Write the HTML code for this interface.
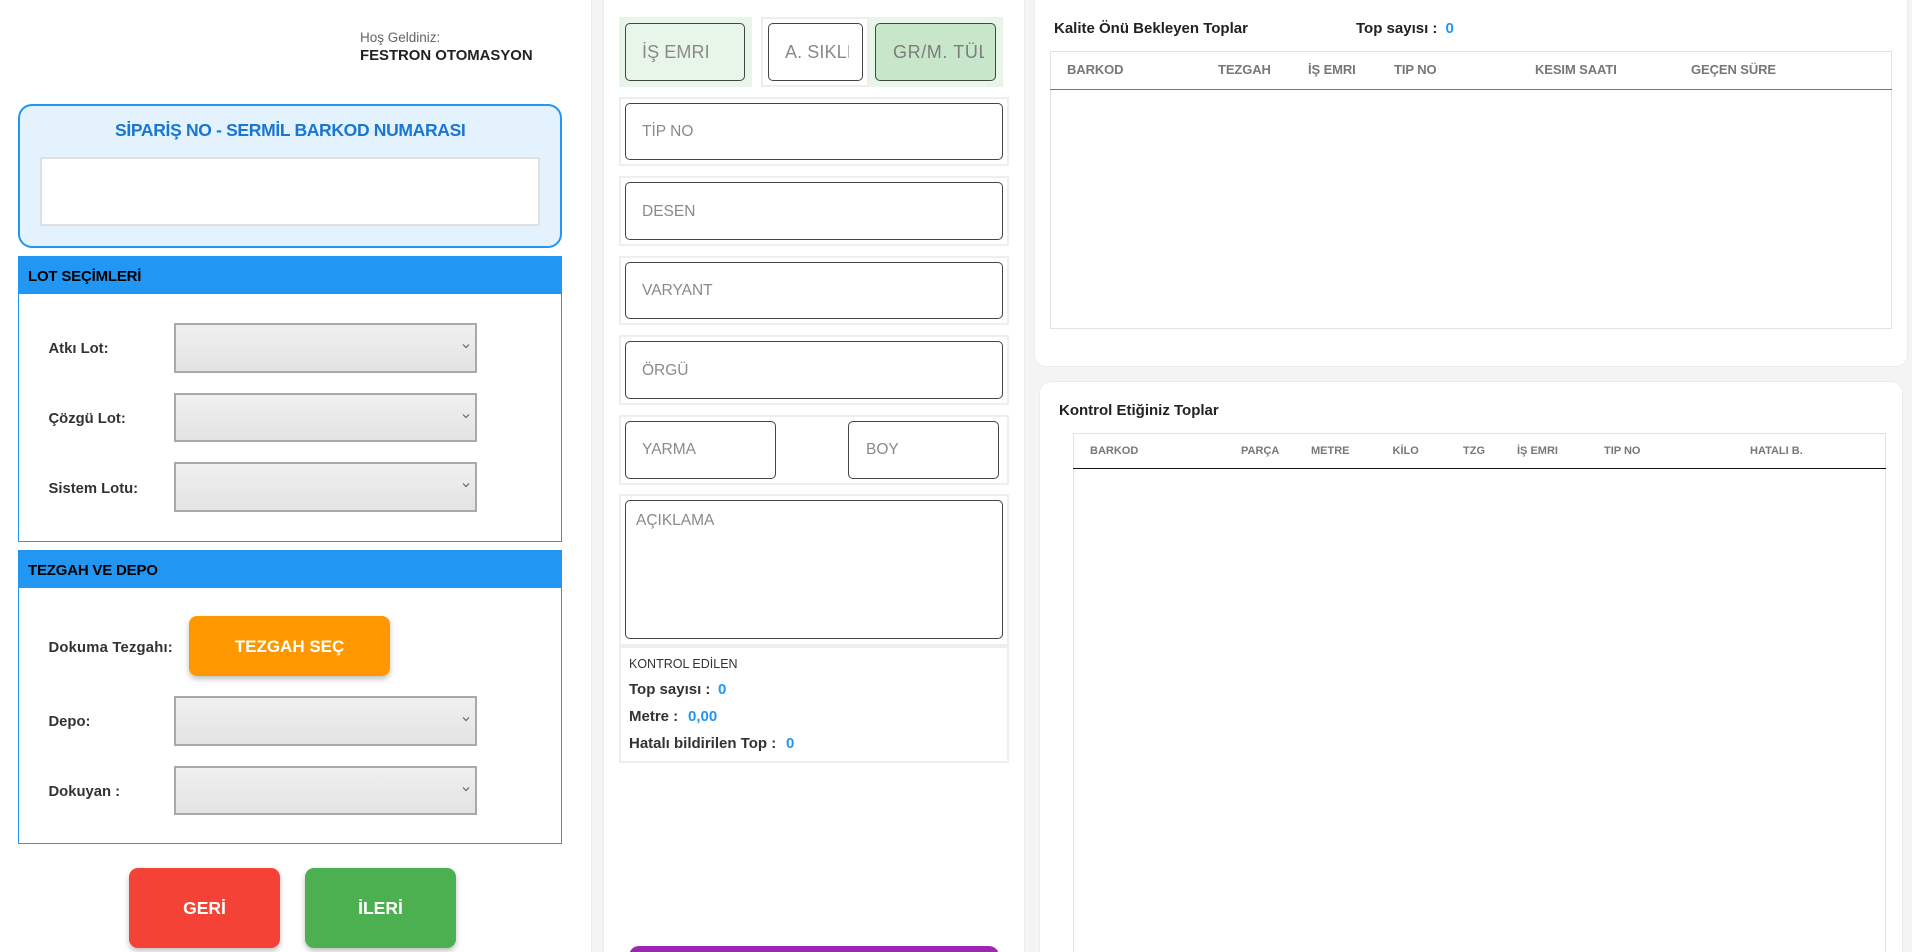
<!DOCTYPE html>
<html lang="tr"><head><meta charset="utf-8"><title>Kalite Kontrol</title>
<style>
*{box-sizing:border-box}
html,body{margin:0;padding:0;width:1912px;height:952px;overflow:hidden;background:#f4f4f4;font-family:"Liberation Sans",Arial,sans-serif}
#wrap{position:relative;width:1912px;height:952px;overflow:hidden;background:#f4f4f4}
.a{position:absolute}
.t{position:absolute;white-space:nowrap;line-height:20px;height:20px}
.panel{position:absolute;background:#fff;border:1px solid #ececec;border-radius:12px}
.hd{position:absolute;left:18px;width:544px;height:38px;background:#2196f3}
.bd{position:absolute;left:18px;width:544px;border:1px solid #2196f3;background:#fff}
.lh{font-weight:bold;font-size:15px;color:#000;letter-spacing:-.2px;left:28px}
.lb{font-weight:bold;font-size:14.8px;color:#333;left:48.5px}
.sel{position:absolute;left:174px;width:303px;border:2px solid #a9a9a9;background:linear-gradient(#f0f0f0,#e3e3e3)}
.sel svg{position:absolute;right:5px;top:50%;margin-top:-6px}
.grp{position:absolute;border:2px solid #eeeeee;background:#fff}
.inp{position:absolute;border:1px solid #444;border-radius:5px;background:#fff}
.ph{color:#8a8a8a;font-size:15.5px}
.ph2{color:#8a8a8a;font-size:18px;letter-spacing:-.1px}
.btn{position:absolute;border-radius:9px;box-shadow:0 3px 6px rgba(0,0,0,.25);color:#fff;font-weight:bold;font-size:17.5px;display:flex;align-items:center;justify-content:center}
.kv{font-weight:bold;font-size:15px;color:#333;left:629px}
.v{font-weight:bold;font-size:15px;color:#2196f3}
.th{font-weight:bold;font-size:13px;color:#777;letter-spacing:-.1px;top:60px}
.th2{font-weight:bold;font-size:11px;color:#777;top:441px}
.ttl{font-weight:bold;font-size:15px;color:#222}
</style></head><body><div id="wrap">

<div class="panel" style="left:-12px;top:-12px;width:604px;height:980px"></div>
<div class="t" style="left:360px;top:28px;font-size:13.5px;color:#666">Hoş Geldiniz:</div>
<div class="t" style="left:360px;top:46px;font-size:14.9px;font-weight:bold;color:#222">FESTRON OTOMASYON</div>

<div class="a" style="left:18px;top:104px;width:544px;height:144px;background:#e3f2fd;border:2px solid #2196f3;border-radius:14px"></div>
<div class="t" style="left:115px;top:120px;width:349px;text-align:center;font-size:17.5px;font-weight:bold;color:#1976d2;letter-spacing:-.33px">SİPARİŞ NO - SERMİL BARKOD NUMARASI</div>
<div class="a" style="left:40px;top:157px;width:500px;height:69px;background:#fff;border:2px solid #e0e0e0"></div>

<div class="bd" style="top:256px;height:286px"></div>
<div class="hd" style="top:256px"></div>
<div class="t lh" style="top:267px">LOT SEÇİMLERİ</div>
<div class="t lb" style="top:339px">Atkı Lot:</div>
<div class="sel" style="top:323px;height:50px"><svg width="8" height="8" viewBox="0 0 8 8"><path d="M1 2.5L4 5.5L7 2.5" fill="none" stroke="#666" stroke-width="1.2"/></svg></div>
<div class="t lb" style="top:409px">Çözgü Lot:</div>
<div class="sel" style="top:393px;height:49px"><svg width="8" height="8" viewBox="0 0 8 8"><path d="M1 2.5L4 5.5L7 2.5" fill="none" stroke="#666" stroke-width="1.2"/></svg></div>
<div class="t lb" style="top:479px">Sistem Lotu:</div>
<div class="sel" style="top:462px;height:50px"><svg width="8" height="8" viewBox="0 0 8 8"><path d="M1 2.5L4 5.5L7 2.5" fill="none" stroke="#666" stroke-width="1.2"/></svg></div>

<div class="bd" style="top:550px;height:294px"></div>
<div class="hd" style="top:550px"></div>
<div class="t lh" style="top:561px">TEZGAH VE DEPO</div>
<div class="t lb" style="top:638px;letter-spacing:.2px">Dokuma Tezgahı:</div>
<div class="btn" style="left:189px;top:616px;width:201px;height:60px;background:#ff9800;border-radius:8px;font-size:17px;padding-top:1px">TEZGAH SEÇ</div>
<div class="t lb" style="top:712px">Depo:</div>
<div class="sel" style="top:696px;height:50px"><svg width="8" height="8" viewBox="0 0 8 8"><path d="M1 2.5L4 5.5L7 2.5" fill="none" stroke="#666" stroke-width="1.2"/></svg></div>
<div class="t lb" style="top:782px">Dokuyan :</div>
<div class="sel" style="top:766px;height:49px"><svg width="8" height="8" viewBox="0 0 8 8"><path d="M1 2.5L4 5.5L7 2.5" fill="none" stroke="#666" stroke-width="1.2"/></svg></div>

<div class="btn" style="left:129px;top:868px;width:151px;height:80px;background:#f44336">GERİ</div>
<div class="btn" style="left:305px;top:868px;width:151px;height:80px;background:#4caf50">İLERİ</div>

<div class="panel" style="left:603px;top:-12px;width:422px;height:980px"></div>

<div class="a" style="left:619px;top:17px;width:133px;height:70px;background:#e8f5e9"></div>
<div class="inp" style="left:625px;top:23px;width:120px;height:58px;background:#e8f5e9"></div>
<div class="t ph2" style="left:642px;top:42px;letter-spacing:.1px">İŞ EMRI</div>

<div class="grp" style="left:761px;top:17px;width:108px;height:70px"></div>
<div class="inp" style="left:768px;top:23px;width:95px;height:58px"></div>
<div class="t ph2" style="left:785px;top:42px;width:64px;overflow:hidden;letter-spacing:.1px">A. SIKLIK</div>

<div class="a" style="left:869px;top:17px;width:134px;height:70px;background:#e8f5e9"></div>
<div class="inp" style="left:875px;top:23px;width:121px;height:58px;background:#c8e6c9"></div>
<div class="t ph2" style="left:893px;top:42px;width:91px;overflow:hidden;color:#7d7d7d;letter-spacing:.6px">GR/M. TÜL</div>

<div class="grp" style="left:619px;top:97px;width:390px;height:69px"></div>
<div class="inp" style="left:625px;top:103px;width:378px;height:57px"></div>
<div class="t ph" style="left:642px;top:122px">TİP NO</div>

<div class="grp" style="left:619px;top:176px;width:390px;height:70px"></div>
<div class="inp" style="left:625px;top:182px;width:378px;height:58px"></div>
<div class="t ph" style="left:642px;top:202px">DESEN</div>

<div class="grp" style="left:619px;top:256px;width:390px;height:69px"></div>
<div class="inp" style="left:625px;top:262px;width:378px;height:57px"></div>
<div class="t ph" style="left:642px;top:281px">VARYANT</div>

<div class="grp" style="left:619px;top:335px;width:390px;height:70px"></div>
<div class="inp" style="left:625px;top:341px;width:378px;height:58px"></div>
<div class="t ph" style="left:642px;top:361px">ÖRGÜ</div>

<div class="grp" style="left:619px;top:415px;width:390px;height:70px"></div>
<div class="inp" style="left:625px;top:421px;width:151px;height:58px"></div>
<div class="inp" style="left:848px;top:421px;width:151px;height:58px"></div>
<div class="t ph" style="left:642px;top:440px">YARMA</div>
<div class="t ph" style="left:866px;top:440px">BOY</div>

<div class="grp" style="left:619px;top:494px;width:390px;height:152px"></div>
<div class="inp" style="left:625px;top:500px;width:378px;height:139px"></div>
<div class="t ph" style="left:636px;top:511px">AÇIKLAMA</div>

<div class="grp" style="left:619px;top:646px;width:390px;height:117px"></div>
<div class="t" style="left:629px;top:654px;font-size:12.5px;color:#333">KONTROL EDİLEN</div>
<div class="t kv" style="top:680px">Top sayısı :</div><div class="t v" style="left:718px;top:680px">0</div>
<div class="t kv" style="top:707px">Metre :</div><div class="t v" style="left:688px;top:707px">0,00</div>
<div class="t kv" style="top:734px">Hatalı bildirilen Top :</div><div class="t v" style="left:786px;top:734px">0</div>

<div class="a" style="left:629px;top:946px;width:370px;height:30px;background:#9c27b0;border-radius:10px"></div>

<div class="panel" style="left:1034px;top:-12px;width:874px;height:379px"></div>
<div class="t ttl" style="left:1054px;top:19px">Kalite Önü Bekleyen Toplar</div>
<div class="t ttl" style="left:1356px;top:19px">Top sayısı :</div>
<div class="t" style="left:1445.5px;top:19px;font-size:15px;font-weight:bold;color:#2196f3">0</div>
<div class="a" style="left:1050px;top:51px;width:842px;height:278px;border:1px solid #e2e2e2;background:#fff"></div>
<div class="a" style="left:1050px;top:89px;width:842px;height:1px;background:#777"></div>
<div class="t th" style="left:1067px">BARKOD</div>
<div class="t th" style="left:1218px">TEZGAH</div>
<div class="t th" style="left:1308px">İŞ EMRI</div>
<div class="t th" style="left:1394px">TIP NO</div>
<div class="t th" style="left:1535px">KESIM SAATI</div>
<div class="t th" style="left:1691px">GEÇEN SÜRE</div>

<div class="panel" style="left:1039px;top:381px;width:864px;height:600px"></div>
<div class="t ttl" style="left:1059px;top:401px">Kontrol Etiğiniz Toplar</div>
<div class="a" style="left:1073px;top:433px;width:813px;height:540px;border:1px solid #e2e2e2;background:#fff"></div>
<div class="a" style="left:1073px;top:468px;width:813px;height:1px;background:#111"></div>
<div class="t th2" style="left:1090px">BARKOD</div>
<div class="t th2" style="left:1241px">PARÇA</div>
<div class="t th2" style="left:1311px">METRE</div>
<div class="t th2" style="left:1392.5px">KİLO</div>
<div class="t th2" style="left:1463px">TZG</div>
<div class="t th2" style="left:1517px">İŞ EMRI</div>
<div class="t th2" style="left:1604px">TIP NO</div>
<div class="t th2" style="left:1750px">HATALI B.</div>

</div></body></html>
